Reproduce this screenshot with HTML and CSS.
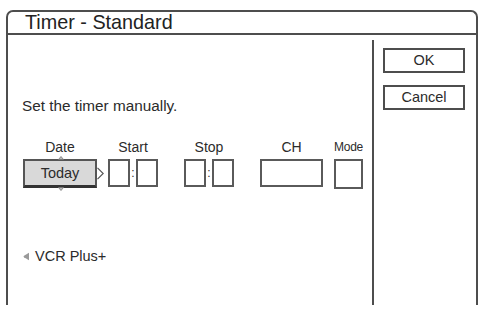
FILE: index.html
```html
<!DOCTYPE html>
<html>
<head>
<meta charset="utf-8">
<link rel="stylesheet" href="styles.css">
</head>
<body>
<div class="frame">
  <div class="header">Timer - Standard</div>
  <div class="body">
    <div class="main">
      <div class="intro">Set the timer manually.</div>
      <div class="fields">
        <div class="col col-date">
          <div class="label">Date</div>
          <div class="today">
            Today
            <svg class="tab tab-up" width="6" height="4" viewBox="0 0 6 4"><path d="M0.5 3.5 L3 0.5 L5.5 3.5 Z" fill="#bbb" stroke="#777" stroke-width="0.8"/></svg>
            <svg class="tab tab-down" width="6" height="4" viewBox="0 0 6 4"><path d="M0.5 0.5 L3 3.5 L5.5 0.5 Z" fill="#bbb" stroke="#777" stroke-width="0.8"/></svg>
            <svg class="arrow-right" width="7" height="13" viewBox="0 0 7 13"><path d="M0.5 0.8 L6.2 6.5 L0.5 12.2" fill="#fff" stroke="#555" stroke-width="1.2"/></svg>
          </div>
        </div>
        <div class="col col-start">
          <div class="label">Start</div>
          <div class="pair"><div class="cell"></div><span class="colon">:</span><div class="cell"></div></div>
        </div>
        <div class="col col-stop">
          <div class="label">Stop</div>
          <div class="pair"><div class="cell"></div><span class="colon">:</span><div class="cell"></div></div>
        </div>
        <div class="col col-ch">
          <div class="label">CH</div>
          <div class="ch-box"></div>
        </div>
        <div class="col col-mode">
          <div class="label label-small">Mode</div>
          <div class="mode-box"></div>
        </div>
      </div>
      <div class="vcr">
        <svg class="vcr-icon" width="7" height="9" viewBox="0 0 7 9"><path d="M6 0.8 L6 8.2 L1 5.2 Q0 4.5 1 3.8 Z" fill="#9a9a9a"/></svg>
        <span>VCR Plus+</span>
      </div>
    </div>
    <div class="side">
      <div class="btn">OK</div>
      <div class="btn">Cancel</div>
    </div>
  </div>
</div>
</body>
</html>
```

FILE: styles.css
```css
html, body {
  margin: 0;
  padding: 0;
  background: #fff;
}
body {
  width: 482px;
  height: 309px;
  overflow: hidden;
  font-family: "Liberation Sans", Arial, sans-serif;
  color: #2b2b2b;
}
.frame {
  box-sizing: border-box;
  margin: 10px 0 0 6px;
  width: 472px;
  height: 295px;
  border: 2px solid #4d4d4d;
  border-bottom: none;
  border-radius: 7px 7px 0 0;
  display: flex;
  flex-direction: column;
}
.header {
  height: 21px;
  line-height: 21px;
  font-size: 19.8px;
  padding-left: 17px;
  border-bottom: 2px solid #4d4d4d;
  color: #222;
}
.body {
  flex: 1;
  display: flex;
}
.main {
  flex: 1;
  padding-left: 15px;
}
.intro {
  margin-top: 62px;
  margin-left: -1px;
  font-size: 15.3px;
  line-height: 17px;
}
.fields {
  display: flex;
  margin-top: 25px;
}
.col {
  display: flex;
  flex-direction: column;
  align-items: center;
}
.label {
  height: 16px;
  line-height: 16px;
  font-size: 14px;
  margin-bottom: 4px;
  white-space: nowrap;
}
.label-small {
  font-size: 12px;
  letter-spacing: -0.3px;
}
.col-start { margin-left: 11px; }
.col-stop { margin-left: 26px; }
.col-ch { margin-left: 26px; }
.col-mode { margin-left: 11px; }
.today {
  position: relative;
  box-sizing: border-box;
  width: 74px;
  height: 29px;
  background: #d9d9d9;
  border: 2px solid #555;
  border-bottom: 3px solid #333;
  text-align: center;
  font-size: 14.5px;
  line-height: 24px;
}
.tab {
  position: absolute;
  left: 33px;
}
.tab-up { top: -5px; }
.tab-down { bottom: -6px; }
.arrow-right {
  position: absolute;
  top: 6px;
  right: -9px;
}
.pair {
  display: flex;
  align-items: center;
}
.cell {
  box-sizing: border-box;
  width: 22px;
  height: 28px;
  border: 2px solid #5a5a5a;
}
.colon {
  width: 6px;
  text-align: center;
  font-size: 12px;
  line-height: 28px;
  color: #333;
}
.ch-box {
  box-sizing: border-box;
  width: 63px;
  height: 28px;
  border: 2px solid #5a5a5a;
}
.mode-box {
  box-sizing: border-box;
  width: 29px;
  height: 30px;
  border: 2px solid #5a5a5a;
}
.vcr {
  display: flex;
  align-items: center;
  margin-top: 59px;
  font-size: 14.5px;
  line-height: 17px;
}
.vcr-icon {
  margin-right: 5px;
}
.side {
  box-sizing: border-box;
  width: 104px;
  margin-top: 5px;
  border-left: 2px solid #4d4d4d;
  padding: 8px 0 0 9px;
  display: flex;
  flex-direction: column;
  gap: 12px;
}
.btn {
  box-sizing: border-box;
  width: 82px;
  height: 25px;
  border: 2px solid #4d4d4d;
  text-align: center;
  font-size: 14.5px;
  line-height: 20px;
}
```
